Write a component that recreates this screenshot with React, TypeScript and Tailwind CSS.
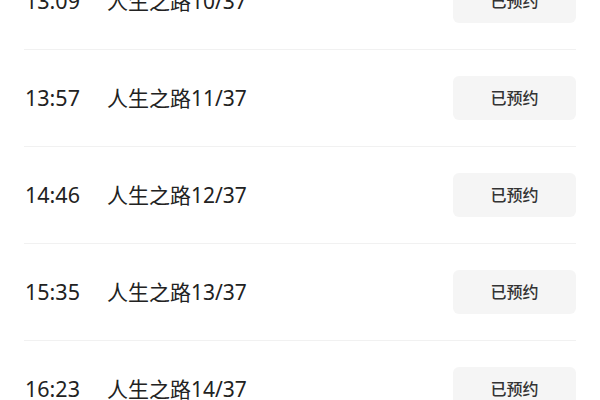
const rows = [
  { time: '13:09', title: '人生之路10/37' },
  { time: '13:57', title: '人生之路11/37' },
  { time: '14:46', title: '人生之路12/37' },
  { time: '15:35', title: '人生之路13/37' },
  { time: '16:23', title: '人生之路14/37' },
];

export default function App() {
  return (
    <div
      className="w-[600px] h-[400px] overflow-hidden bg-white"
      style={{ fontFamily: '"Noto Sans", "Noto Sans CJK SC", sans-serif' }}
    >
      <ul className="-mt-[47px] pl-6 pr-6">
        {rows.map((r) => (
          <li
            key={r.time}
            className="flex items-center py-[26px] border-b border-[#f1f1f1]"
          >
            <span className="pl-px text-[21.5px] text-[#222] leading-none">{r.time}</span>
            <span className="ml-[27px] text-[21px] text-[#222] leading-none">
              {r.title}
            </span>
            <button className="ml-auto w-[123px] h-11 rounded-md bg-[#f5f5f5] text-[16px] font-medium text-[#333]">
              已预约
            </button>
          </li>
        ))}
      </ul>
    </div>
  );
}
